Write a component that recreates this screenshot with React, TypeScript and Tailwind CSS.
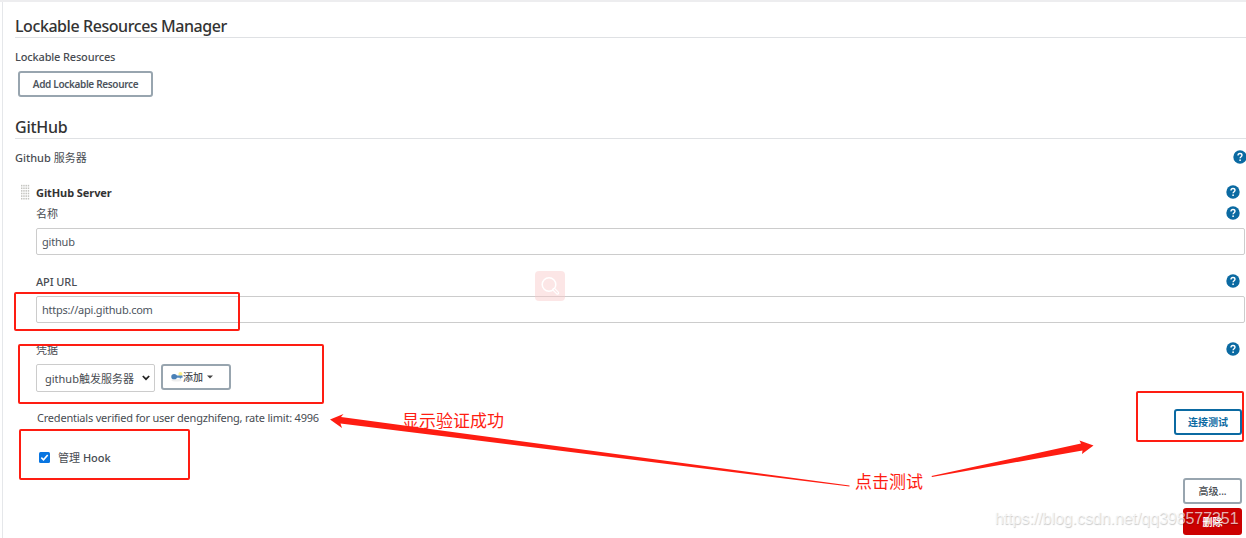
import type { ReactNode } from 'react'

const RED = '#fe1d12'

function HelpIcon() {
    return (
        <svg viewBox="0 0 14 14" className="h-[14px] w-[14px] shrink-0">
            <circle cx="7" cy="7" r="6.7" fill="#0b6aa2" />
            <path d="M5 5.5C5 4.2 5.9 3.5 7 3.5s2 .7 2 1.8c0 1.3-1.9 1.5-1.9 3" fill="none" stroke="#fff" strokeWidth="1.35" />
            <circle cx="7.1" cy="10.2" r=".85" fill="#fff" />
        </svg>
    )
}

function Heading({ children, tracking }: { children: ReactNode; tracking: string }) {
    return (
        <h2 className={`flex h-[23px] items-center border-b border-[#dfe1e4] text-[16px] font-medium text-[#333] ${tracking}`}>
            {children}
        </h2>
    )
}

function TextField({ value, tracking }: { value: string; tracking: string }) {
    return (
        <input
            readOnly
            value={value}
            className={`block h-[27px] w-[1209px] rounded-[2px] border border-[#ccc] bg-white px-[5px] text-[11px] text-[#4d545d] outline-none ${tracking}`}
        />
    )
}

function DragHandle() {
    return (
        <svg viewBox="0 0 10 17" className="mr-[6px] h-[17px] w-[9px]">
            {Array.from({ length: 24 }).map((_, i) => (
                <rect key={i} x={(i % 4) * 2.5} y={Math.floor(i / 4) * 2.9} width="1.6" height="1.8" fill="#c4c4c0" />
            ))}
        </svg>
    )
}

function KeyIcon() {
    return (
        <svg viewBox="0 0 13 12" className="h-[12px] w-[12px] shrink-0">
            <ellipse cx="6" cy="9.5" rx="5.5" ry="1.5" fill="#eee" />
            <circle cx="10.2" cy="2.8" r="2.2" fill="#fbf08a" />
            <path d="M5 4.5h7.5v2.2H11v1H9.5v-1H5z" fill="#5289bd" />
            <ellipse cx="3.4" cy="5.6" rx="3.1" ry="2.8" fill="#4a80b6" />
        </svg>
    )
}

export default function App() {
    return (
        <div className="relative h-[538px] w-[1246px] overflow-hidden border-t-2 border-[#ededef] bg-white font-['Noto_Sans','Noto_Sans_CJK_SC',sans-serif] text-[11px] leading-none text-[#484c52]">
            <div className="ml-[2px] h-full border-l border-[#e5e7ea] pl-[12px] pt-[13px]">
                <Heading tracking="tracking-[-0.43px]">Lockable Resources Manager</Heading>
                <div className="mt-[9px] flex h-[18px] items-center font-medium tracking-[-0.16px]">Lockable Resources</div>
                <button className="ml-[3px] mt-[6px] flex h-[26px] w-[135px] items-center justify-center rounded-[3px] border-2 border-[#98a5af] text-[10px] font-semibold tracking-[-0.34px] text-[#4d545d]">
                    Add Lockable Resource
                </button>

                <div className="mt-[19px]">
                    <Heading tracking="tracking-[-0.25px]">GitHub</Heading>
                </div>
                <div className="mt-[9px] flex h-[18px] items-center justify-between">
                    <span className="font-medium">Github <span className="font-normal">服务器</span></span>
                    <div className="mr-[-1px]"><HelpIcon /></div>
                </div>

                <div className="ml-[6px] mt-[16px] flex h-[20px] items-center">
                    <DragHandle />
                    <span className="flex-1 font-bold tracking-[-0.08px] text-[#333]">GitHub Server</span>
                    <div className="mr-[6px]"><HelpIcon /></div>
                </div>

                {/* Server fields */}
                <div className="ml-[21px]">
                    <div className="mr-[6px] flex h-[22px] items-center justify-between">
                        <span>名称</span>
                        <HelpIcon />
                    </div>
                    <div className="mt-[4px]"><TextField value="github" tracking="tracking-[-0.2px]" /></div>

                    <div className="mr-[6px] mt-[16px] flex h-[20px] items-center justify-between">
                        <span className="font-medium tracking-[-0.1px]">API URL</span>
                        <HelpIcon />
                    </div>
                    <div className="mt-[5px]"><TextField value="https://api.github.com" tracking="tracking-[-0.23px]" /></div>

                    <div className="mr-[6px] mt-[16px] flex h-[20px] items-center justify-between">
                        <span>凭据</span>
                        <HelpIcon />
                    </div>
                    <div className="mt-[5px] flex items-start gap-[6px]">
                        <div className="flex h-[28px] w-[119px] items-center justify-between rounded-[2px] border border-[#ccc] pl-[8px] pr-[4px]">
                            <span>github触发服务器</span>
                            <svg viewBox="0 0 8 6" className="h-[6px] w-[8px]">
                                <path d="M.8 1l3.2 3.2L7.2 1" fill="none" stroke="#222" strokeWidth="1.7" />
                            </svg>
                        </div>
                        <button className="flex h-[26px] w-[70px] items-center rounded-[3px] border-2 border-[#98a5af] pl-[8px] text-[10px] font-medium">
                            <KeyIcon />
                            <span className="shrink-0">添加</span>
                            <svg viewBox="0 0 6 4" className="ml-[4px] h-[4px] w-[6px]"><path d="M0 .5h6L3 3.5z" fill="#444" /></svg>
                        </button>
                    </div>

                    <div className="ml-px mt-[17px] flex items-start justify-between">
                        <span className="mt-[3px] tracking-[-0.21px]">Credentials verified for user dengzhifeng, rate limit: 4996</span>
                        <button className="mr-[4px] flex h-[26px] w-[68px] items-center justify-center rounded-[3px] border-2 border-[#0b6aa2] text-[10px] font-bold text-[#0b6aa2]">
                            连接测试
                        </button>
                    </div>
                    <label className="ml-[3px] mt-[13px] flex h-[18px] items-center">
                        <svg viewBox="0 0 11 11" className="mr-[8px] h-[11px] w-[11px]">
                            <rect width="11" height="11" rx="1.5" fill="#0875e1" />
                            <path d="M2.3 5.7l2.2 2.1 4.2-4.9" fill="none" stroke="#fff" strokeWidth="1.6" />
                        </svg>
                        <span>管理 <span className="font-medium">Hook</span></span>
                    </label>
                    <div className="mr-[4px] mt-[12px] flex flex-col items-end gap-[4px] text-[10px]">
                        <button className="flex h-[26px] w-[59px] items-center justify-center rounded-[3px] border-2 border-[#98a5af] font-medium">高级...</button>
                        <button className="flex h-[27px] w-[59px] items-center justify-center rounded-[3px] bg-[#c00] font-bold text-white">删除</button>
                    </div>
                </div>
            </div>

            {/* Annotations */}
            <div className="absolute left-[14px] top-[290px] h-[39px] w-[226px] rounded-[2px] border-2 border-[#fe1d12]" />
            <div className="absolute left-[18px] top-[342px] h-[60px] w-[306px] rounded-[2px] border-2 border-[#fe1d12]" />
            <div className="absolute left-[19px] top-[427px] h-[51px] w-[171px] rounded-[2px] border-2 border-[#fe1d12]" />
            <div className="absolute left-[1136px] top-[389px] h-[51px] w-[108px] rounded-[2px] border-2 border-[#fe1d12]" />
            <span className="absolute left-[402px] top-[410px] text-[17px] text-[#fe1d12]">显示验证成功</span>
            <span className="absolute left-[855px] top-[471px] text-[17px] text-[#fe1d12]">点击测试</span>
            <svg viewBox="0 0 1246 538" className="pointer-events-none absolute left-0 top-[-2px] h-[538px] w-[1246px]">
                <path d="M330 419.5L343.5 414l-2.5 3 508.500 68.500v1L340.500 423.500l1.500 4.500z" fill={RED} />
                <path d="M931.500 476L1081 443.500l-1.500-3L1093.500 445.500 1082 454l.5-3.500L932 477z" fill={RED} />
            </svg>

            <div className="absolute left-[535px] top-[269px] flex h-[30px] w-[30px] items-center justify-center rounded-[4px] bg-[#f8c8c8]/45">
                <svg viewBox="0 0 20 20" className="h-[20px] w-[20px]">
                    <circle cx="9" cy="8.5" r="6.8" fill="none" stroke="#fff" strokeWidth="1.5" />
                    <path d="M14 13.5l3.5 3.5" stroke="#fff" strokeWidth="3.5" strokeLinecap="round" />
                    <path d="M14.3 13.8l3 3" stroke="#fce8e8" strokeWidth="1.3" strokeLinecap="round" />
                </svg>
            </div>
            <span className="absolute left-[995px] top-[509px] whitespace-nowrap font-['Liberation_Sans'] text-[16px] tracking-[-0.06px] text-white/70 [text-shadow:0.5px_0.5px_1px_rgba(0,0,0,0.22)]">
                https://blog.csdn.net/qq398577351
            </span>
        </div>
    )
}
